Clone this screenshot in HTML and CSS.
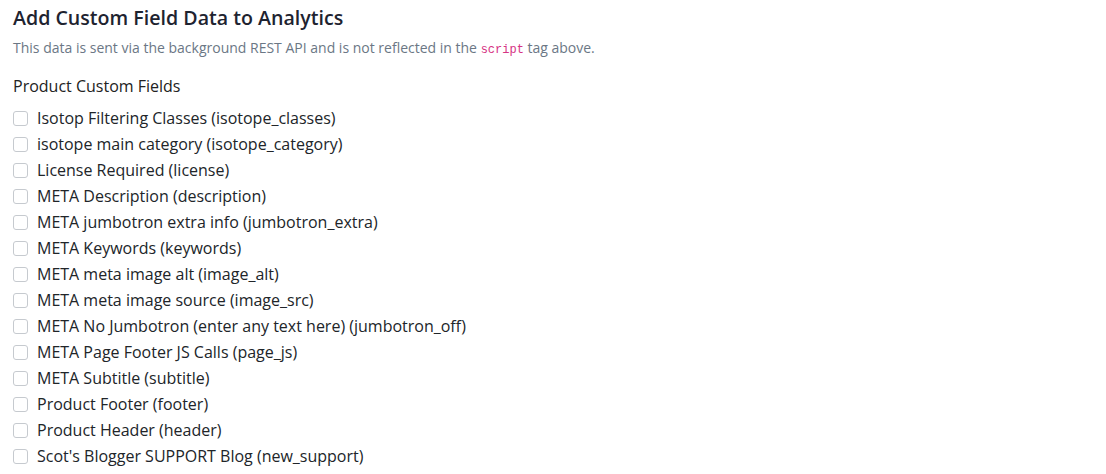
FILE: index.html
```html
<!DOCTYPE html>
<html>
<head>
<meta charset="utf-8">
<link rel="stylesheet" href="styles.css">
</head>
<body>
<div class="panel">
  <h5 class="title">Add Custom Field Data to Analytics</h5>
  <p class="hint">This data is sent via the background REST API and is not reflected in the <code>script</code> tag above.</p>
  <div class="group-label">Product Custom Fields</div>
  <ul class="fields">
    <li><label><input type="checkbox"><span>Isotop Filtering Classes (isotope_classes)</span></label></li>
    <li><label><input type="checkbox"><span>isotope main category (isotope_category)</span></label></li>
    <li><label><input type="checkbox"><span>License Required (license)</span></label></li>
    <li><label><input type="checkbox"><span>META Description (description)</span></label></li>
    <li><label><input type="checkbox"><span>META jumbotron extra info (jumbotron_extra)</span></label></li>
    <li><label><input type="checkbox"><span>META Keywords (keywords)</span></label></li>
    <li><label><input type="checkbox"><span>META meta image alt (image_alt)</span></label></li>
    <li><label><input type="checkbox"><span>META meta image source (image_src)</span></label></li>
    <li><label><input type="checkbox"><span>META No Jumbotron (enter any text here) (jumbotron_off)</span></label></li>
    <li><label><input type="checkbox"><span>META Page Footer JS Calls (page_js)</span></label></li>
    <li><label><input type="checkbox"><span>META Subtitle (subtitle)</span></label></li>
    <li><label><input type="checkbox"><span>Product Footer (footer)</span></label></li>
    <li><label><input type="checkbox"><span>Product Header (header)</span></label></li>
    <li><label><input type="checkbox"><span>Scot's Blogger SUPPORT Blog (new_support)</span></label></li>
  </ul>
</div>
</body>
</html>
```
FILE: styles.css
```css
html, body {
  margin: 0;
  padding: 0;
  background: #ffffff;
}
body {
  font-family: "Open Sans", "Noto Sans", sans-serif;
  color: #212529;
  font-size: 16px;
}
.panel {
  padding: 6px 13px 0 13px;
}
.title {
  margin: 0;
  font-size: 19.6px;
  font-weight: 600;
  line-height: 24px;
  color: #1e2330;
}
.hint {
  margin: 9px 0 0 0;
  font-size: 14px;
  line-height: 18px;
  color: #6b7785;
}
.hint code {
  font-family: "Liberation Mono", "DejaVu Sans Mono", monospace;
  font-size: 12px;
  color: #d63384;
}
.group-label {
  margin-top: 17px;
  font-size: 16px;
  line-height: 20px;
  color: #222;
}
.fields {
  list-style: none;
  margin: 9px 0 0 0;
  padding: 0;
}
.fields li {
  height: 26px;
  display: flex;
  align-items: center;
}
.fields label {
  display: flex;
  align-items: center;
  gap: 9px;
}
.fields input {
  appearance: none;
  -webkit-appearance: none;
  box-sizing: border-box;
  margin: 0;
  width: 15px;
  height: 15px;
  border: 1px solid #c6cacf;
  border-radius: 3px;
  background: #fff;
}
.fields span {
  font-size: 16px;
  line-height: 20px;
  color: #212529;
}
```
